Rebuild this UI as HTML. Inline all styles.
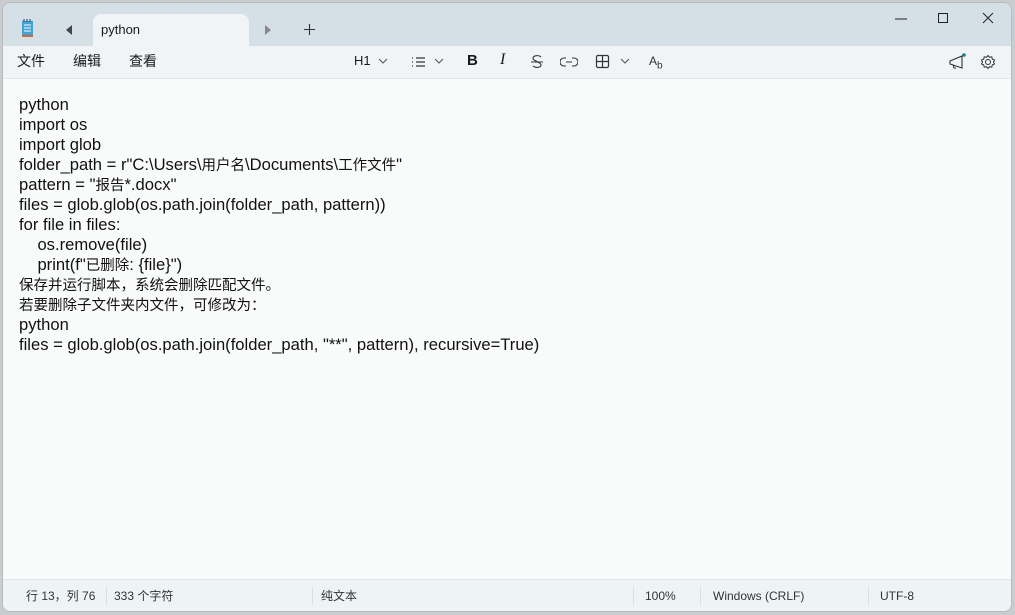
<!DOCTYPE html>
<html><head><meta charset="utf-8"><style>
*{margin:0;padding:0;box-sizing:border-box}
body{width:1015px;height:615px;background:#c9cdd0;font-family:"Liberation Sans","Noto Sans CJK SC",sans-serif;position:relative;overflow:hidden}
.win{position:absolute;left:2px;top:2px;width:1010px;height:610px;border-radius:8px;overflow:hidden;background:#f9fafa;border:1px solid #b8bcbf}
.title{position:absolute;left:0;top:0;right:0;height:43px;background:#d4e0e5}
.tab{position:absolute;left:90px;top:11px;width:156px;height:33px;background:#f0f4f6;border-radius:8px 8px 0 0;font-size:13px;line-height:16px;color:#1a1a1a;padding:8px 0 0 8px}
.tb{position:absolute;left:0;top:43px;right:0;height:33px;background:#f0f4f6;border-bottom:1px solid #e2e6e8}
.menu{position:absolute;top:7px;font-size:14px;line-height:16px;color:#1a1a1a}
.ed{position:absolute;left:16px;top:92px;font-size:16.6px;color:#111;white-space:pre}
.ed div{height:20px;line-height:20px;overflow:visible}
.ed b{font-weight:normal;font-size:14.5px;line-height:0;vertical-align:0}
.st{position:absolute;left:0;right:0;bottom:0;height:32px;background:#eef4f6;border-top:1px solid #e0e5e7;font-size:12px;line-height:14px;color:#333}
.st span{position:absolute;top:9px}
.sep{position:absolute;top:7px;width:1px;height:18px;background:#d9dee0}
svg{position:absolute}
</style></head><body><div class="win">
<div class="title">
<svg style="left:17px;top:15px" width="16" height="20" viewBox="0 0 16 20"><rect x="2" y="3" width="11" height="15" fill="#3fa5d6"/><rect x="2" y="17" width="11" height="2" fill="#c76b3a"/><g stroke="#fff" stroke-width="1"><line x1="4" y1="7" x2="11" y2="7"/><line x1="4" y1="10" x2="11" y2="10"/><line x1="4" y1="13" x2="11" y2="13"/></g><g stroke="#235" stroke-width="1"><line x1="4" y1="1" x2="4" y2="4"/><line x1="7" y1="1" x2="7" y2="4"/><line x1="10" y1="1" x2="10" y2="4"/></g></svg>
<svg style="left:62px;top:22px" width="8" height="10"><path d="M7 0L1 5L7 10Z" fill="#444"/></svg>
<div class="tab">python</div>
<svg style="left:261px;top:22px" width="8" height="10"><path d="M1 0L7 5L1 10Z" fill="#888"/></svg>
<svg style="left:300px;top:20px" width="13" height="13"><path d="M6.5 1V12M1 6.5H12" stroke="#333" stroke-width="1.1"/></svg>
<svg style="left:892px;top:15px" width="14" height="2"><path d="M0 1H12" stroke="#222"/></svg>
<svg style="left:934px;top:9px" width="12" height="12"><rect x="1.5" y="1.5" width="9" height="9" fill="none" stroke="#222"/></svg>
<svg style="left:979px;top:9px" width="12" height="12"><path d="M1 1L11 11M11 1L1 11" stroke="#222"/></svg>
</div>
<div class="tb">
<div class="menu" style="left:14px">文件</div><div class="menu" style="left:70px">编辑</div><div class="menu" style="left:126px">查看</div>
<div class="menu" style="left:351px;font-size:13px">H1</div>
<svg style="left:375px;top:12px" width="10" height="6"><path d="M1 1L5 5L9 1" stroke="#555" fill="none"/></svg>
<svg style="left:408px;top:10px" width="15" height="12"><g stroke="#333" stroke-width="1.2"><path d="M1 2H2M1 6H2M1 10H2M5 2H14M5 6H14M5 10H14"/></g></svg>
<svg style="left:431px;top:12px" width="10" height="6"><path d="M1 1L5 5L9 1" stroke="#555" fill="none"/></svg>
<div class="menu" style="left:464px;font-weight:bold;font-size:15px">B</div>
<div class="menu" style="left:497px;font-style:italic;font-size:16px;top:6px;font-family:'Liberation Serif',serif">I</div>
<svg style="left:527px;top:8px" width="14" height="16"><path d="M11 3C9 1 3 1 3 4.5C3 7 11 8 11 11C11 14 5 14 3 12M1 8H13" stroke="#333" fill="none" stroke-width="1.1"/></svg>
<svg style="left:557px;top:10px" width="18" height="12"><path d="M6 2H4a4 4 0 000 8H6M12 2H14a4 4 0 010 8H12M6 6H12" stroke="#333" fill="none" stroke-width="1.1"/></svg>
<svg style="left:592px;top:8px" width="16" height="16"><rect x="1.5" y="1.5" width="12" height="12" rx="1.5" fill="none" stroke="#333" stroke-width="1.2"/><path d="M7.5 1.5V13.5M1.5 7.5H13.5" stroke="#333" stroke-width="1.2"/></svg>
<svg style="left:617px;top:12px" width="10" height="6"><path d="M1 1L5 5L9 1" stroke="#555" fill="none"/></svg>
<div class="menu" style="left:646px;font-size:12px;color:#333">A<sub style="font-size:10px">b</sub></div>
<svg style="left:944px;top:6px" width="20" height="18"><path d="M3 9L15 4V16L3 12Z M6 12.5L7 16H9" stroke="#333" fill="none" stroke-width="1.1"/><circle cx="17" cy="3" r="1.8" fill="#1d7a8c"/></svg>
<svg style="left:977px;top:8px" width="16" height="16"><circle cx="8" cy="8" r="2.5" fill="none" stroke="#333"/><path d="M8 1.5L9.5 3.3L11.8 2.8L12.3 5.1L14.5 6L13.5 8L14.5 10L12.3 10.9L11.8 13.2L9.5 12.7L8 14.5L6.5 12.7L4.2 13.2L3.7 10.9L1.5 10L2.5 8L1.5 6L3.7 5.1L4.2 2.8L6.5 3.3Z" fill="none" stroke="#333"/></svg>
</div>
<div class="ed"><div>python</div><div>import os</div><div>import glob</div><div>folder_path = r"C:\Users\<b>用户名</b>\Documents\<b>工作文件</b>"</div><div>pattern = "<b>报告</b>*.docx"</div><div>files = glob.glob(os.path.join(folder_path, pattern))</div><div>for file in files:</div><div>    os.remove(file)</div><div>    print(f"<b>已删除</b>: {file}")</div><div><b>保存并运行脚本，系统会删除匹配文件。</b></div><div><b>若要删除子文件夹内文件，可修改为：</b></div><div>python</div><div>files = glob.glob(os.path.join(folder_path, "**", pattern), recursive=True)</div></div>
<div class="st">
<span style="left:23px">行 13，列 76</span><div class="sep" style="left:103px"></div>
<span style="left:111px">333 个字符</span><div class="sep" style="left:309px"></div>
<span style="left:318px">纯文本</span><div class="sep" style="left:630px"></div>
<span style="left:642px">100%</span><div class="sep" style="left:697px"></div>
<span style="left:710px">Windows (CRLF)</span><div class="sep" style="left:865px"></div>
<span style="left:877px">UTF-8</span>
</div>
</div></body></html>
